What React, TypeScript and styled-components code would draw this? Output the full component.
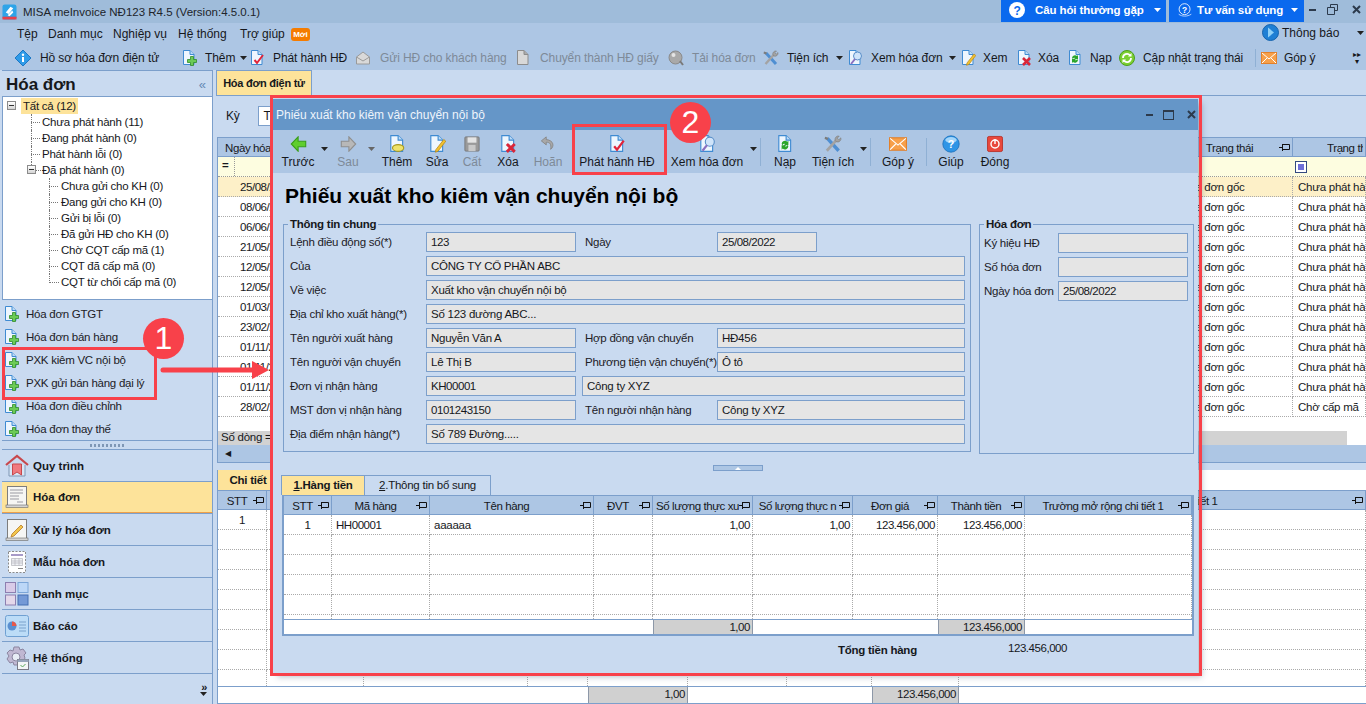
import React from "react";
import styled, { createGlobalStyle } from "styled-components";

const GlobalStyle = createGlobalStyle`
  html, body { margin: 0; padding: 0; background: #c9daf0; }
  body {
    font-family: "Liberation Sans", Arial, sans-serif;
    font-size: 11.5px;
    letter-spacing: -0.25px;
    color: #16181c;
    overflow: hidden;
  }
  * { box-sizing: border-box; }
`;

const RED = "#f8414a";
const LINE = "#7c9fcb";

/* ---------- icons ---------- */
type Badge = "plus" | "check" | "x" | "pencil" | "lens" | "coin" | "nap" | "none";

const DocIcon = ({ badge = "none", size = 16, grey = false }: { badge?: Badge; size?: number; grey?: boolean }) => {
  const line = grey ? "#8c8c8c" : "#3f8bd2";
  return (
    <svg width={size} height={size} viewBox="0 0 16 16">
      <path d="M2.500.5h6.500l4 4v10h-10.500z" fill={grey ? "#d8d8d8" : "#eef6fe"} stroke={line} />
      <path d="M9 .5v4h4" fill={grey ? "#aaa" : "#bcdaf6"} stroke={line} />
      {badge === "plus" && <path d="M9.500 6.500h3v3h3v3h-3v3h-3v-3h-3v-3h3z" fill="#6ccb55" stroke="#2f8a2a" strokeWidth=".8" />}
      {badge === "check" && <path d="M5.500 10l2.500 3 6-8" fill="none" stroke="#e0243a" strokeWidth="2" />}
      {badge === "x" && <path d="M7 8l7 7M14 8l-7 7" stroke="#d9263a" strokeWidth="2.600" />}
      {badge === "pencil" && <path d="M7 13l7-9 1.800 1.500-7 9-2.300.8z" fill="#f2c230" stroke="#b8871a" strokeWidth=".7" />}
      {badge === "lens" && (
        <g>
          <circle cx="10.500" cy="6" r="4" fill="#cfe4fa" stroke="#5a8fc8" />
          <path d="M8 9l-4 5" stroke="#8a6fc0" strokeWidth="2" />
        </g>
      )}
      {badge === "coin" && <ellipse cx="9" cy="11.500" rx="5" ry="3" fill="#efe36a" stroke="#a99a20" />}
      {badge === "nap" && <path d="M5 8a3 3 0 0 1 5-2l1-1v4h-4l1-1a1.500 1.500 0 0 0-2 1zM11 10a3 3 0 0 1-5 2l-1 1v-4h4l-1 1a1.500 1.500 0 0 0 2-1z" fill="#2aa52a" />}
    </svg>
  );
};

const InfoDiamond = () => (
  <svg width="18" height="18" viewBox="0 0 18 18">
    <path d="M9 1l8 8-8 8-8-8z" fill="#2f9be8" stroke="#1c77c4" />
    <circle cx="9" cy="5.800" r="1.200" fill="#fff" />
    <rect x="8" y="8" width="2" height="5" fill="#fff" />
  </svg>
);

const Envelope = ({ grey = false, size = 16 }: { grey?: boolean; size?: number }) =>
  grey ? (
    <svg width={size} height={size} viewBox="0 0 16 16">
      <path d="M1.500 7L8 2l6.500 5v7h-13z" fill="#d9d9d9" stroke="#9a9a9a" />
      <path d="M1.500 7L8 11l6.500-4" fill="none" stroke="#9a9a9a" />
    </svg>
  ) : (
    <svg width={size} height={size} viewBox="0 0 16 16">
      <rect x=".5" y="2.500" width="15" height="11" fill="#f7a04a" stroke="#e2802a" />
      <path d="M1 3l7 6 7-6M1 13l5-5M15 13l-5-5" fill="none" stroke="#fff" />
    </svg>
  );

const ToolsIcon = ({ size = 16 }: { size?: number }) => (
  <svg width={size} height={size} viewBox="0 0 16 16">
    <path d="M3 3l10 11" stroke="#4f8fd2" strokeWidth="3" />
    <path d="M2.500 14L11 4.500" stroke="#a3a3a3" strokeWidth="2.400" />
    <path d="M10 5a3 3 0 0 1 3.500-4l-1.700 1.800 1.400 1.400L15 2.500A3 3 0 0 1 11 6z" fill="#a3a3a3" stroke="#7c7c7c" strokeWidth=".6" />
    <path d="M1 1.500l3 1-1 2-2.500-1z" fill="#7c7c7c" />
  </svg>
);

const GreenRefresh = () => (
  <svg width="16" height="16" viewBox="0 0 16 16">
    <circle cx="8" cy="8" r="7.500" fill="#7ccf32" stroke="#4c9f1c" />
    <path d="M4 8a4 4 0 0 1 7-2.700M12 8a4 4 0 0 1-7 2.700" fill="none" stroke="#fff" strokeWidth="1.800" />
    <path d="M12.500 3v3.500H9zM3.500 13V9.500H7z" fill="#fff" />
  </svg>
);

const Globe = () => (
  <svg width="17" height="17" viewBox="0 0 17 17">
    <circle cx="8.500" cy="8.500" r="8" fill="#1f7fd4" stroke="#1663ad" />
    <path d="M6 3.500l6 5-6 5z" fill="#8fd0f7" />
  </svg>
);

const GreyBall = () => (
  <svg width="16" height="16" viewBox="0 0 16 16">
    <circle cx="7.500" cy="7.500" r="6.500" fill="#a9a9a9" stroke="#8a8a8a" />
    <circle cx="5.500" cy="5" r="2" fill="#e4e4e4" />
    <path d="M12 11l3 4" stroke="#7a7a7a" strokeWidth="2" />
  </svg>
);

const AppLogo = () => (
  <svg width="15" height="16" viewBox="0 0 16 17">
    <rect x=".5" y=".5" width="15" height="16" rx="2.500" fill="#2ea4e8" />
    <path d="M4 9l5-6 3 1.500-5 6zM6 12l5-5 1 2-4 4z" fill="#fff" />
    <rect x=".5" y="13.500" width="15" height="3" fill="#e8404a" />
  </svg>
);

const ArrowIcon = ({ dir, grey }: { dir: "left" | "right"; grey?: boolean }) => (
  <svg width="17" height="16" viewBox="0 0 20 20">
    <g transform={dir === "right" ? "matrix(-1 0 0 1 20 0)" : undefined}>
      <path
        d="M9.500 1L1 10l8.500 9v-5.500h9.500v-7H9.500z"
        fill={grey ? "#b8b8b8" : "#5fce2e"}
        stroke={grey ? "#8f8f8f" : "#3a9d1c"}
        strokeWidth="1.400"
      />
    </g>
  </svg>
);

const FloppyIcon = () => (
  <svg width="16" height="16" viewBox="0 0 18 18">
    <rect x="1" y="1" width="16" height="16" rx="1" fill="#9a9a9a" stroke="#777" />
    <rect x="4" y="1.500" width="10" height="6" fill="#e4e4e4" />
    <rect x="5" y="10" width="8" height="7" fill="#c9c9c9" />
  </svg>
);

const UndoIcon = () => (
  <svg width="16" height="16" viewBox="0 0 18 18">
    <path d="M7 1L1.500 5.500 7 10V7c4 0 6 2 5 8 4-3 4-10-5-11z" fill="#a8a8a8" stroke="#858585" />
  </svg>
);

const HelpIcon = () => (
  <svg width="18" height="18" viewBox="0 0 22 22">
    <circle cx="11" cy="11" r="10" fill="#2f95e6" stroke="#1b6fba" />
    <ellipse cx="11" cy="6" rx="7" ry="3.500" fill="#a5d6fa" />
    <text x="11" y="16" fontFamily="Liberation Sans" fontSize="13" fontWeight="700" fill="#fff" textAnchor="middle">?</text>
  </svg>
);

const PowerIcon = () => (
  <svg width="16" height="18" viewBox="0 0 18 20">
    <rect x=".5" y="1.500" width="17" height="17" rx="2" fill="#e8483c" stroke="#b92f26" />
    <circle cx="9" cy="10" r="4.500" fill="none" stroke="#fff" strokeWidth="1.600" />
    <path d="M9 4.500V10" stroke="#fff" strokeWidth="1.600" />
  </svg>
);

const Caret = ({ color = "#222" }: { color?: string }) => (
  <svg width="7" height="4" viewBox="0 0 7 4">
    <path d="M0 0h7L3.500 4z" fill={color} />
  </svg>
);

const PinIcon = () => (
  <svg width="11" height="9" viewBox="0 0 11 9">
    <path d="M0 4.500h4M3.500 1v7M3.500 1.500h7v5h-7" fill="none" stroke="#111" />
  </svg>
);

const HouseIcon = () => (
  <svg width="24" height="24" viewBox="0 0 24 24">
    <path d="M4 11v11h16V11" fill="#d9e6f5" stroke="#7f97b5" />
    <path d="M1 11L12 2l11 9" fill="none" stroke="#c8484c" strokeWidth="2.200" />
    <path d="M7.500 10h9v11l-4.500-3-4.500 3z" fill="#f07a80" stroke="#c8484c" />
  </svg>
);

const LedgerIcon = ({ pencil }: { pencil?: boolean }) => (
  <svg width="24" height="24" viewBox="0 0 24 24">
    <rect x="2.500" y="1.500" width="19" height="20" fill="#f6f6f4" stroke="#7d7d7d" />
    <rect x="1" y="20" width="22" height="2.500" fill="#d4d4d4" stroke="#6a6a6a" strokeWidth=".6" />
    {pencil ? (
      <path d="M7 16l9-9 2 2-9 9-3 1z" fill="#f3c64b" stroke="#b67b2a" strokeWidth=".8" />
    ) : (
      <path d="M5 5h13M5 8h13M5 11h9M5 14h9M12 17h6" stroke="#9a9aa2" strokeWidth="1.200" />
    )}
  </svg>
);

const FormIcon = () => (
  <svg width="24" height="24" viewBox="0 0 24 24">
    <rect x="3.500" y="1.500" width="17" height="21" fill="#fff" stroke="#8a8a8a" strokeDasharray="2 1.500" />
    <rect x="6" y="4" width="12" height="2" fill="#a79ac8" />
    <path d="M6.500 8.500h11v7h-11zM6.500 11h11M6.500 13h11M10 8.500v7M14 8.500v7" fill="#eef0f4" stroke="#b4b4bc" strokeWidth=".7" />
    <path d="M13 18.500h5" stroke="#888" />
  </svg>
);

const CatalogIcon = () => (
  <svg width="24" height="24" viewBox="0 0 24 24">
    <rect x=".5" y=".5" width="10" height="10" fill="#d9cbe8" stroke="#8d7fb0" />
    <rect x="13" y=".5" width="10" height="10" fill="#bcd7f7" stroke="#7ca6d8" />
    <rect x=".5" y="13" width="10" height="10" fill="#e4d8ea" stroke="#8d7fb0" />
    <rect x="13" y="13" width="10" height="10" fill="#7499d6" stroke="#456eb2" />
  </svg>
);

const ReportIcon = () => (
  <svg width="24" height="24" viewBox="0 0 24 24">
    <rect x=".5" y="1.500" width="23" height="21" rx="2" fill="#bcdcf7" stroke="#6fa0d2" />
    <circle cx="7" cy="12" r="4.500" fill="#5a8fd0" />
    <path d="M7 12V7.500A4.500 4.500 0 0 1 11.500 12z" fill="#e8584a" />
    <path d="M14 8h7M14 11h7M14 14h7M14 17h7" stroke="#7ba2cc" />
  </svg>
);

const GearIcon = () => (
  <svg width="24" height="24" viewBox="0 0 24 24">
    <path d="M9 1h5l1 3 3-1 3 4-2 2 1 3-2 4-3-.5-1 3.500H9l-1-3-3 1-3-4 2-3-2-3 3-3 3 1z" fill="#c0b8d2" stroke="#8b85a0" />
    <circle cx="11" cy="11" r="4" fill="#e7edf5" stroke="#8b85a0" />
    <rect x="12.500" y="13.500" width="11" height="10" fill="#f4f6f8" stroke="#7a7a86" />
    <rect x="12.500" y="13.500" width="11" height="2.500" fill="#97a5bb" />
    <path d="M15.500 19l2 2 3-3" fill="none" stroke="#5ca85c" />
  </svg>
);

/* ---------- top bars ---------- */
const Page = styled.div`
  position: relative;
  width: 1366px;
  height: 704px;
  overflow: hidden;
  display: flex;
  flex-direction: column;
  background: #c9daf0;
`;

const TitleBar = styled.div`
  height: 23px;
  background: #9fbcda;
  display: flex;
  align-items: flex-start;
  letter-spacing: 0;
`;

const AppTitle = styled.div`
  display: flex;
  align-items: center;
  gap: 6px;
  height: 23px;
  padding-left: 2px;
  flex: 1;
  color: #20242a;
`;

const HelpBtn = styled.div<{ $w: number; $gap: number }>`
  width: ${(p) => p.$w}px;
  height: 22px;
  margin-right: 3px;
  background: #0a69ee;
  color: #fff;
  font-weight: 700;
  letter-spacing: -0.1px;
  display: flex;
  align-items: center;
  padding: 0 6px 2px 8px;
  gap: ${(p) => p.$gap}px;
  white-space: nowrap;
  span { flex: 1; }
  svg { flex: none; }
`;

const WinBtns = styled.div`
  width: 59px;
  height: 23px;
  display: flex;
  align-items: center;
  justify-content: space-between;
  padding: 0 5px 4px 2px;
  color: #333;
`;

const MenuBar = styled.div`
  height: 22px;
  background: #adc6e4;
  display: flex;
  align-items: center;
  font-size: 12px;
  letter-spacing: 0;
`;

const Grip = styled.div`
  width: 3px;
  height: 18px;
  margin-left: 4px;
  background-image: radial-gradient(#7f97b5 40%, transparent 45%);
  background-size: 2px 2px;
  flex: none;
`;

const BarSlot = styled.div<{ $w: number }>`
  width: ${(p) => p.$w}px;
  flex: none;
  white-space: nowrap;
`;

const NewBadge = styled.div`
  width: 19px;
  height: 13px;
  border-radius: 3px;
  background: #f57c00;
  color: #fff;
  font-size: 8px;
  font-weight: 700;
  line-height: 13px;
  text-align: center;
`;

const NoticeBtn = styled.div`
  margin-left: auto;
  display: flex;
  align-items: center;
  gap: 3px;
  width: 104px;
  padding: 0 2px 3px 0;
  white-space: nowrap;
  span { flex: 1; }
`;

const TopToolbar = styled.div`
  height: 25px;
  background: #adc6e4;
  display: flex;
  align-items: center;
  font-size: 12px;
  letter-spacing: -0.1px;
`;

const TopBtn = styled.div<{ $w: number; $off?: boolean; $gap?: number }>`
  width: ${(p) => p.$w}px;
  flex: none;
  display: flex;
  align-items: center;
  gap: ${(p) => p.$gap ?? 8}px;
  white-space: nowrap;
  color: ${(p) => (p.$off ? "#7e8a98" : "#16181c")};
  svg { flex: none; }
`;

const TopCaret = styled.div<{ $w: number }>`
  width: ${(p) => p.$w}px;
  flex: none;
  display: flex;
  align-items: center;
  padding-left: 1px;
`;

const BarSep = styled.div`
  width: 1px;
  height: 18px;
  background: #8fb0d4;
  flex: none;
`;

const Overflow = styled.div`
  margin-left: auto;
  margin-right: 5px;
  font-size: 8px;
  line-height: 7px;
  text-align: center;
`;

/* ---------- sidebar ---------- */
const Workspace = styled.div`
  flex: 1;
  display: grid;
  grid-template-columns: 216px 1fr;
  min-height: 0;
`;

const Sidebar = styled.aside`
  display: flex;
  flex-direction: column;
  padding-left: 2px;
  padding-right: 3px;
`;

const SideHead = styled.div`
  height: 26px;
  display: flex;
  align-items: center;
  justify-content: space-between;
  padding: 2px 6px 0 4px;
  border-top: 1px solid ${LINE};
  border-right: 1px solid ${LINE};
  font-size: 17px;
  font-weight: 700;
  letter-spacing: 0;
  b { font-size: 13px; color: #6488b4; font-weight: 400; }
`;

const Tree = styled.div`
  height: 204px;
  background: #fff;
  border: 1px solid ${LINE};
  padding-top: 1px;
`;

const TreeRow = styled.div<{ $level: number; $last?: boolean }>`
  position: relative;
  height: 16px;
  line-height: 16px;
  padding-left: ${(p) => 18 + p.$level * 19}px;
  white-space: nowrap;
  &::before {
    content: "";
    display: ${(p) => (p.$level ? "block" : "none")};
    position: absolute;
    left: ${(p) => 10 + p.$level * 18}px;
    top: 0;
    width: 9px;
    height: ${(p) => (p.$last ? 8 : 16)}px;
    border-left: 1px dotted #777;
    border-bottom: ${(p) => (p.$last ? "1px dotted #777" : "0")};
  }
  &::after {
    content: "";
    display: ${(p) => (p.$level && !p.$last ? "block" : "none")};
    position: absolute;
    left: ${(p) => 10 + p.$level * 18}px;
    top: 8px;
    width: 9px;
    border-top: 1px dotted #777;
  }
`;

const TreeLabel = styled.span<{ $on?: boolean }>`
  display: inline-block;
  padding: 0 2px;
  background: ${(p) => (p.$on ? "#fde39a" : "transparent")};
`;

const Expander = styled.i<{ $left: number }>`
  position: absolute;
  z-index: 1;
  left: ${(p) => p.$left}px;
  top: 3px;
  width: 9px;
  height: 9px;
  border: 1px solid #8b8b8b;
  background: linear-gradient(#fff, #d4d4d4);
  &::after {
    content: "";
    position: absolute;
    left: 1px;
    right: 1px;
    top: 3px;
    height: 1px;
    background: #333;
  }
`;

const Shortcuts = styled.div`
  height: 141px;
  padding: 2px 0 0 1px;
  border-right: 1px solid ${LINE};
  border-bottom: 1px solid ${LINE};
`;

const Shortcut = styled.div`
  height: 23px;
  display: flex;
  align-items: center;
  gap: 7px;
  color: #1c2026;
`;

const SideGrip = styled.div`
  height: 8px;
  display: flex;
  justify-content: center;
  align-items: center;
  border-right: 1px solid ${LINE};
  &::before {
    content: "";
    width: 35px;
    height: 3px;
    background-image: repeating-linear-gradient(90deg, #7f97b5 0 2px, transparent 2px 4px);
  }
`;

const NavItem = styled.div<{ $on?: boolean }>`
  height: 32px;
  display: flex;
  align-items: center;
  gap: 4px;
  padding-left: 3px;
  font-weight: 700;
  letter-spacing: 0;
  border-top: 1px solid ${LINE};
  border-right: 1px solid ${LINE};
  background: ${(p) => (p.$on ? "#fde39a" : "transparent")};
  border-bottom: ${(p) => (p.$on ? "1px solid #eea04a" : "0")};
`;

const NavRest = styled.div`
  flex: 1;
  border-top: 1px solid ${LINE};
  border-right: 1px solid ${LINE};
  display: flex;
  flex-direction: column;
  align-items: flex-end;
  justify-content: center;
  padding-right: 5px;
  font-size: 11px;
  line-height: 10px;
  font-weight: 700;
`;

/* ---------- main area ---------- */
const Main = styled.main`
  display: flex;
  flex-direction: column;
  min-width: 0;
`;

const TabStrip = styled.div`
  height: 26px;
  border-bottom: 1px solid ${LINE};
`;

const MainTab = styled.div`
  width: 96px;
  height: 26px;
  background: #fde39a;
  border: 1px solid ${LINE};
  font-weight: 700;
  font-size: 11px;
  line-height: 24px;
  text-align: center;
`;

const PeriodRow = styled.div`
  height: 41px;
  display: flex;
  align-items: center;
  gap: 18px;
  padding: 0 0 2px 10px;
  font-size: 12px;
`;

const PeriodInput = styled.div`
  width: 130px;
  height: 20px;
  background: #fff;
  border: 1px solid ${LINE};
  padding-left: 5px;
  line-height: 18px;
`;

const GridShell = styled.div<{ $h: number }>`
  height: ${(p) => p.$h}px;
  margin-left: 1px;
  background: #fff;
  border-left: 1px solid ${LINE};
  overflow: hidden;
  display: flex;
  flex-direction: column;
`;

const GridLine = styled.div<{ $cols: string }>`
  display: grid;
  grid-template-columns: ${(p) => p.$cols};
  flex: none;
`;

const HeadCell = styled.div<{ $pad?: number }>`
  height: 20px;
  background: #adc6e4;
  border-right: 1px solid ${LINE};
  border-top: 1px solid ${LINE};
  border-bottom: 1px solid ${LINE};
  display: flex;
  align-items: center;
  padding: 1px 2px 0 ${(p) => p.$pad ?? 3}px;
  letter-spacing: -0.4px;
  white-space: nowrap;
  overflow: hidden;
  span { flex: 1; text-align: ${(p) => (p.$pad !== undefined ? "left" : "center")}; overflow: hidden; }
  svg { flex: none; }
`;

const FilterCell = styled.div`
  height: 20px;
  background: #fdfde0;
  border-bottom: 1px dotted #999;
  display: flex;
  align-items: center;
  overflow: hidden;
`;

const FilterSign = styled.div`
  width: 17px;
  height: 19px;
  border-right: 1px dotted #999;
  padding-left: 4px;
  line-height: 17px;
  font-weight: 700;
`;

const FilterBox = styled.div`
  width: 12px;
  height: 12px;
  margin-left: 2px;
  border: 1px solid #334a80;
  background: #fff;
  padding: 2px;
  &::after {
    content: "";
    display: block;
    height: 100%;
    background: #6f6fd8;
  }
`;

const DataCell = styled.div<{ $right?: boolean; $center?: boolean; $sel?: boolean; $pad?: number; $num?: boolean }>`
  height: 20px;
  line-height: 21px;
  border-right: 1px dotted #aaa;
  border-bottom: 1px dotted #aaa;
  padding: 0 ${(p) => (p.$right ? 2 : 4)}px 0 ${(p) => p.$pad ?? 4}px;
  text-align: ${(p) => (p.$center ? "center" : p.$right ? "right" : "left")};
  background: ${(p) => (p.$sel ? "#fdf0c8" : "#fff")};
  letter-spacing: ${(p) => (p.$num ? "-0.45px" : "inherit")};
  white-space: nowrap;
  overflow: hidden;
`;

const GridBody = styled.div`
  flex: 1;
  min-height: 0;
  overflow: hidden;
`;

const CountRow = styled.div`
  height: 14px;
  flex: none;
  margin-right: 19px;
  background: #d2d2d2;
  line-height: 13px;
  padding-left: 3px;
  overflow: hidden;
`;

const ScrollRow = styled.div`
  height: 18px;
  flex: none;
  background: #adc6e4;
  border-bottom: 1px solid ${LINE};
  display: flex;
  align-items: center;
  padding-left: 7px;
  font-size: 8px;
`;

const PanelGap = styled.div`
  height: 7px;
  flex: none;
`;

const DetailTab = styled.div`
  width: 60px;
  height: 20px;
  background: #fde39a;
  font-weight: 700;
  line-height: 20px;
  text-align: center;
  flex: none;
`;

const SumCell = styled.div<{ $grey?: boolean }>`
  height: 16px;
  line-height: 15px;
  padding-right: 2px;
  text-align: right;
  letter-spacing: -0.45px;
  background: ${(p) => (p.$grey ? "#d0d0d0" : "#fff")};
  border-left: ${(p) => (p.$grey ? "1px solid #8d98a8" : "0")};
  border-right: ${(p) => (p.$grey ? "1px solid #8d98a8" : "0")};
`;

const SumRow = styled(GridLine)`
  border-top: 1px solid ${LINE};
  border-bottom: 1px solid ${LINE};
`;

/* ---------- dialog ---------- */
const Dialog = styled.section`
  position: absolute;
  left: 273px;
  top: 99px;
  width: 925px;
  height: 574px;
  background: #c9daf0;
  box-shadow: 4px 4px 6px rgba(60, 80, 110, 0.35);
  display: flex;
  flex-direction: column;
`;

const DialogTitle = styled.div`
  height: 31px;
  flex: none;
  background: #6596c8;
  color: #eef4fb;
  font-size: 12px;
  letter-spacing: 0;
  display: flex;
  align-items: center;
  justify-content: space-between;
  padding: 0 2px 0 3px;
`;

const DialogCtrls = styled.div`
  display: flex;
  align-items: center;
  gap: 9px;
  color: #2c3a4c;
`;

const MinGlyph = styled.i`
  width: 7px;
  height: 2px;
  background: #2c3a4c;
  margin-right: 1px;
`;

const MaxGlyph = styled.i`
  width: 11px;
  height: 10px;
  border: 1px solid #2c3a4c;
  border-top-width: 2px;
`;

const CloseGlyph = styled.svg`
  width: 9px;
  height: 9px;
  margin-left: 4px;
`;

const DialogBar = styled.div`
  height: 43px;
  flex: none;
  background: #adc6e4;
  display: flex;
  padding-left: 5px;
  font-size: 12px;
  letter-spacing: 0;
`;

const BarItem = styled.div<{ $w: number; $off?: boolean }>`
  width: ${(p) => p.$w}px;
  flex: none;
  display: flex;
  flex-direction: column;
  align-items: center;
  color: ${(p) => (p.$off ? "#7e8a98" : "#16181c")};
  white-space: nowrap;
`;

const BarIcon = styled.div`
  height: 25px;
  display: flex;
  align-items: center;
  justify-content: center;
  padding-top: 3px;
`;

const BarLabel = styled.div`
  line-height: 14px;
`;

const BarCaret = styled.div<{ $w: number }>`
  width: ${(p) => p.$w}px;
  flex: none;
  padding-top: 17px;
  line-height: 0;
  text-align: center;
`;

const BarDivider = styled.div<{ $w: number }>`
  width: ${(p) => p.$w}px;
  flex: none;
  display: flex;
  justify-content: center;
  padding-top: 8px;
  &::before {
    content: "";
    width: 1px;
    height: 28px;
    background: #8fb0d4;
  }
`;

const DialogBody = styled.div`
  flex: 1;
  min-height: 0;
  display: flex;
  flex-direction: column;
  padding: 0 4px 0 8px;
`;

const DialogHeading = styled.h1`
  margin: 0;
  height: 44px;
  line-height: 46px;
  padding-left: 4px;
  font-size: 21px;
  font-weight: 700;
  letter-spacing: 0;
  color: #000;
  white-space: nowrap;
  flex: none;
`;

const GroupRow = styled.div`
  display: flex;
  gap: 8px;
  padding-left: 2px;
  height: 235px;
  flex: none;
`;

const Group = styled.fieldset<{ $w: number; $h: number }>`
  margin: 0;
  width: ${(p) => p.$w}px;
  height: ${(p) => p.$h}px;
  padding: 0 5px 0 6px;
  border: 1px solid ${LINE};
  min-width: 0;
`;

const GroupTitle = styled.legend`
  padding: 0 2px;
  margin-left: -2px;
  font-weight: 700;
  line-height: 14px;
`;

const FormGrid = styled.div`
  display: grid;
  grid-template-columns: 136px 150px 141px 100px 148px;
  grid-auto-rows: 20px;
  row-gap: 4px;
  padding-top: 1px;
`;

const InvoiceGrid = styled.div`
  display: grid;
  grid-template-columns: 74px 130px;
  grid-auto-rows: 20px;
  row-gap: 4px;
  padding-top: 2px;
  margin-left: -2px;
`;

const FieldLabel = styled.label<{ $inner?: boolean }>`
  line-height: 21px;
  white-space: nowrap;
  padding-left: ${(p) => (p.$inner ? 9 : 0)}px;
  color: #1c2026;
`;

const FieldBox = styled.div<{ $span?: string; $inset?: number; $num?: boolean }>`
  grid-column: ${(p) => p.$span ?? "auto"};
  margin-left: ${(p) => p.$inset ?? 0}px;
  background: #e5e5e5;
  border: 1px solid ${LINE};
  line-height: 18px;
  padding-left: 4px;
  letter-spacing: ${(p) => (p.$num ? "-0.45px" : "inherit")};
  white-space: nowrap;
  overflow: hidden;
`;

const SplitBtn = styled.div`
  width: 50px;
  height: 6px;
  margin: 13px 0 4px 432px;
  background: #adc6e4;
  border: 1px solid ${LINE};
  display: flex;
  justify-content: center;
  flex: none;
  &::before {
    content: "";
    border-left: 3px solid transparent;
    border-right: 3px solid transparent;
    border-bottom: 3px solid #fff;
  }
`;

const Tabs = styled.div`
  display: flex;
  height: 20px;
  flex: none;
`;

const FormTab = styled.div<{ $on?: boolean; $w: number }>`
  width: ${(p) => p.$w}px;
  height: 20px;
  line-height: 19px;
  text-align: center;
  background: ${(p) => (p.$on ? "#fde39a" : "transparent")};
  font-weight: ${(p) => (p.$on ? 700 : 400)};
  border: 1px solid ${LINE};
  border-bottom: 0;
  border-left-width: ${(p) => (p.$on ? 1 : 0)}px;
  u { text-decoration: underline; }
`;

const ItemsGrid = styled.div`
  margin-left: 1px;
  width: 912px;
  height: 141px;
  background: #fff;
  border: 2px solid ${LINE};
  border-top-width: 0;
  display: flex;
  flex-direction: column;
  overflow: hidden;
  flex: none;
`;

const ItemsBody = styled.div`
  height: 104px;
  overflow: hidden;
  flex: none;
`;

const TotalRow = styled.div`
  display: flex;
  padding-left: 557px;
  margin-top: 6px;
`;

const TotalLabel = styled.div`
  width: 170px;
  padding-top: 2px;
  font-weight: 700;
`;

const TotalValue = styled.div`
  letter-spacing: -0.45px;
`;

/* ---------- annotations ---------- */
const RedFrame = styled.div<{ $x: number; $y: number; $w: number; $h: number }>`
  position: absolute;
  left: ${(p) => p.$x}px;
  top: ${(p) => p.$y}px;
  width: ${(p) => p.$w}px;
  height: ${(p) => p.$h}px;
  border: 3px solid ${RED};
  pointer-events: none;
`;

const StepDot = styled.div<{ $x: number; $y: number }>`
  position: absolute;
  left: ${(p) => p.$x}px;
  top: ${(p) => p.$y}px;
  width: 41px;
  height: 41px;
  border-radius: 50%;
  background: ${RED};
  color: #fff;
  font-size: 32px;
  letter-spacing: 0;
  line-height: 40px;
  text-align: center;
`;

const FlowArrow = styled.svg`
  position: absolute;
  left: 160px;
  top: 360px;
`;

/* ---------- data ---------- */
const dates = ["25/08/2022", "08/06/2022", "06/06/2022", "21/05/2022", "12/05/2022", "12/05/2022", "01/03/2022", "23/02/2022", "01/11/2021", "01/11/2021", "01/11/2021", "28/02/2022"];

const tree: { text: string; level: number; last?: boolean }[] = [
  { text: "Chưa phát hành (11)", level: 1 },
  { text: "Đang phát hành (0)", level: 1 },
  { text: "Phát hành lỗi (0)", level: 1 },
  { text: "Đã phát hành (0)", level: 1, last: true },
  { text: "Chưa gửi cho KH (0)", level: 2 },
  { text: "Đang gửi cho KH (0)", level: 2 },
  { text: "Gửi bị lỗi (0)", level: 2 },
  { text: "Đã gửi HĐ cho KH (0)", level: 2 },
  { text: "Chờ CQT cấp mã (1)", level: 2 },
  { text: "CQT đã cấp mã (0)", level: 2 },
  { text: "CQT từ chối cấp mã (0)", level: 2, last: true },
];

const shortcuts = ["Hóa đơn GTGT", "Hóa đơn bán hàng", "PXK kiêm VC nội bộ", "PXK gửi bán hàng đại lý", "Hóa đơn điều chỉnh", "Hóa đơn thay thế"];

const navs: { label: string; icon: React.ReactNode; on?: boolean }[] = [
  { label: "Quy trình", icon: <HouseIcon /> },
  { label: "Hóa đơn", icon: <LedgerIcon />, on: true },
  { label: "Xử lý hóa đơn", icon: <LedgerIcon pencil /> },
  { label: "Mẫu hóa đơn", icon: <FormIcon /> },
  { label: "Danh mục", icon: <CatalogIcon /> },
  { label: "Báo cáo", icon: <ReportIcon /> },
  { label: "Hệ thống", icon: <GearIcon /> },
];

const itemHeads = ["STT", "Mã hàng", "Tên hàng", "ĐVT", "Số lượng thực xu", "Số lượng thực n", "Đơn giá", "Thành tiền", "Trường mở rộng chi tiết 1"];
const itemCols = "48px 98px 164px 59px 100px 100px 85px 87px 1fr";
const detailCols = "49px 97px 164px 60px 100px 99px 85px 87px 1fr";
const upperCols = "82px 877px 116px 1fr";

const Head = ({ text }: { text: string }) => (
  <HeadCell>
    <span>{text}</span>
    <PinIcon />
  </HeadCell>
);

const TopBar = () => (
  <>
    <TitleBar>
      <AppTitle>
        <AppLogo />
        <span>MISA meInvoice NĐ123 R4.5 (Version:4.5.0.1)</span>
      </AppTitle>
      <HelpBtn $w={165} $gap={10}>
        <svg width="16" height="16" viewBox="0 0 16 16">
          <circle cx="8" cy="8" r="8" fill="#fff" />
          <text x="8" y="12.500" fontFamily="Liberation Sans" fontSize="12" fontWeight="700" fill="#0a69ee" textAnchor="middle">?</text>
        </svg>
        <span>Câu hỏi thường gặp</span>
        <Caret color="#fff" />
      </HelpBtn>
      <HelpBtn $w={135} $gap={4}>
        <svg width="16" height="16" viewBox="0 0 19 16">
          <circle cx="9" cy="7" r="6.500" fill="none" stroke="#fff" />
          <path d="M2 13c4 3 10 3 15 0" fill="none" stroke="#cfe2ff" />
          <text x="9" y="11" fontFamily="Liberation Sans" fontSize="10" fontWeight="700" fill="#fff" textAnchor="middle">?</text>
        </svg>
        <span>Tư vấn sử dụng</span>
        <Caret color="#fff" />
      </HelpBtn>
      <WinBtns>
        <MinGlyph />
        <svg width="11" height="11" viewBox="0 0 11 11">
          <path d="M3.500 3V.5h7v6H8M.5 3.500h7v7h-7z" fill="none" stroke="#2c3a4c" />
        </svg>
        <CloseGlyph viewBox="0 0 9 9">
          <path d="M1 1l7 7M8 1l-7 7" stroke="#2c3a4c" strokeWidth="2" />
        </CloseGlyph>
      </WinBtns>
    </TitleBar>
    <MenuBar>
      <Grip />
      <BarSlot $w={10} />
      <BarSlot $w={31}>Tệp</BarSlot>
      <BarSlot $w={65}>Danh mục</BarSlot>
      <BarSlot $w={65}>Nghiệp vụ</BarSlot>
      <BarSlot $w={62}>Hệ thống</BarSlot>
      <BarSlot $w={51}>Trợ giúp</BarSlot>
      <NewBadge>Mới</NewBadge>
      <NoticeBtn>
        <Globe />
        <span>Thông báo</span>
        <Caret />
      </NoticeBtn>
    </MenuBar>
    <TopToolbar>
      <Grip />
      <BarSlot $w={7} />
      <TopBtn $w={154}>
        <InfoDiamond />
        <span>Hồ sơ hóa đơn điện tử</span>
      </TopBtn>
      <Grip />
      <BarSlot $w={6} />
      <TopBtn $w={58}>
        <DocIcon badge="plus" />
        <span>Thêm</span>
      </TopBtn>
      <TopCaret $w={10}>
        <Caret />
      </TopCaret>
      <TopBtn $w={106}>
        <DocIcon badge="check" />
        <span>Phát hành HĐ</span>
      </TopBtn>
      <TopBtn $w={160} $off $gap={9}>
        <Envelope grey />
        <span>Gửi HĐ cho khách hàng</span>
      </TopBtn>
      <TopBtn $w={153} $off $gap={9}>
        <DocIcon grey />
        <span>Chuyển thành HĐ giấy</span>
      </TopBtn>
      <TopBtn $w={95} $off>
        <GreyBall />
        <span>Tải hóa đơn</span>
      </TopBtn>
      <TopBtn $w={72}>
        <ToolsIcon />
        <span>Tiện ích</span>
      </TopBtn>
      <TopCaret $w={12}>
        <Caret />
      </TopCaret>
      <TopBtn $w={101}>
        <DocIcon badge="lens" />
        <span>Xem hóa đơn</span>
      </TopBtn>
      <TopCaret $w={12}>
        <Caret />
      </TopCaret>
      <TopBtn $w={56} $gap={7}>
        <DocIcon badge="pencil" />
        <span>Xem</span>
      </TopBtn>
      <TopBtn $w={51} $gap={6}>
        <DocIcon badge="x" />
        <span>Xóa</span>
      </TopBtn>
      <TopBtn $w={52} $gap={7}>
        <DocIcon badge="nap" />
        <span>Nạp</span>
      </TopBtn>
      <TopBtn $w={136}>
        <GreenRefresh />
        <span>Cập nhật trạng thái</span>
      </TopBtn>
      <BarSep />
      <BarSlot $w={5} />
      <TopBtn $w={60} $gap={7}>
        <Envelope />
        <span>Góp ý</span>
      </TopBtn>
      <Overflow>
        ▸▸
        <br />▾
      </Overflow>
    </TopToolbar>
  </>
);

const SideBar = () => (
  <Sidebar>
    <SideHead>
      Hóa đơn <b>«</b>
    </SideHead>
    <Tree>
      <TreeRow $level={0}>
        <Expander $left={4} />
        <TreeLabel $on>Tất cả (12)</TreeLabel>
      </TreeRow>
      {tree.map((n) => (
        <TreeRow key={n.text} $level={n.level} $last={n.last}>
          {n.text === "Đã phát hành (0)" && <Expander $left={24} />}
          <TreeLabel>{n.text}</TreeLabel>
        </TreeRow>
      ))}
    </Tree>
    <Shortcuts>
      {shortcuts.map((s) => (
        <Shortcut key={s}>
          <DocIcon badge="plus" />
          {s}
        </Shortcut>
      ))}
    </Shortcuts>
    <SideGrip />
    {navs.map((n) => (
      <NavItem key={n.label} $on={n.on}>
        {n.icon}
        {n.label}
      </NavItem>
    ))}
    <NavRest>
      »
      <Caret />
    </NavRest>
  </Sidebar>
);

const MainArea = () => (
  <Main>
    <TabStrip>
      <MainTab>Hóa đơn điện tử</MainTab>
    </TabStrip>
    <PeriodRow>
      <span>Kỳ</span>
      <PeriodInput>Từ đầu năm</PeriodInput>
    </PeriodRow>
    <GridShell $h={326}>
      <GridLine $cols={upperCols}>
        <HeadCell>
          <span>Ngày hóa đơn</span>
        </HeadCell>
        <HeadCell />
        <Head text="Trạng thái" />
        <HeadCell $pad={34}>
          <span>Trạng thái phát hành</span>
        </HeadCell>
      </GridLine>
      <GridLine $cols={upperCols}>
        <FilterCell>
          <FilterSign>=</FilterSign>
        </FilterCell>
        <FilterCell />
        <FilterCell />
        <FilterCell>
          <FilterBox />
        </FilterCell>
      </GridLine>
      <GridBody>
        {dates.map((d, i) => (
          <GridLine key={i} $cols={upperCols}>
            <DataCell $sel={i === 0} $pad={22} $num>{d}</DataCell>
            <DataCell $sel={i === 0} />
            <DataCell $sel={i === 0}>Hóa đơn gốc</DataCell>
            <DataCell $sel={i === 0} $pad={5}>{i === 11 ? "Chờ cấp mã" : "Chưa phát hành"}</DataCell>
          </GridLine>
        ))}
      </GridBody>
      <CountRow>Số dòng = 12</CountRow>
      <ScrollRow>◀</ScrollRow>
    </GridShell>
    <PanelGap />
    <GridShell $h={234}>
      <DetailTab>Chi tiết</DetailTab>
      <GridLine $cols={detailCols}>
        {itemHeads.map((h) => (
          <Head key={h} text={h} />
        ))}
      </GridLine>
      <GridBody>
        {Array.from({ length: 9 }).map((_, r) => (
          <GridLine key={r} $cols={detailCols}>
            {itemHeads.map((h, c) => (
              <DataCell key={h} $center={c === 0}>
                {r === 0 && c === 0 ? "1" : ""}
              </DataCell>
            ))}
          </GridLine>
        ))}
      </GridBody>
      <SumRow $cols={detailCols}>
        <SumCell />
        <SumCell />
        <SumCell />
        <SumCell />
        <SumCell $grey>1,00</SumCell>
        <SumCell />
        <SumCell />
        <SumCell $grey>123.456,000</SumCell>
        <SumCell />
      </SumRow>
    </GridShell>
  </Main>
);

const itemRow = ["1", "HH00001", "aaaaaa", "", "1,00", "1,00", "123.456,000", "123.456,000", ""];
const rightCols = [4, 5, 6, 7];

const VoucherDialog = () => (
  <Dialog>
    <DialogTitle>
      <span>Phiếu xuất kho kiêm vận chuyển nội bộ</span>
      <DialogCtrls>
        <MinGlyph />
        <MaxGlyph />
        <CloseGlyph viewBox="0 0 9 9">
          <path d="M1 1l7 7M8 1l-7 7" stroke="#2c3a4c" strokeWidth="2" />
        </CloseGlyph>
      </DialogCtrls>
    </DialogTitle>
    <DialogBar>
      <BarItem $w={40}>
        <BarIcon><ArrowIcon dir="left" /></BarIcon>
        <BarLabel>Trước</BarLabel>
      </BarItem>
      <BarCaret $w={12}><Caret /></BarCaret>
      <BarItem $w={36} $off>
        <BarIcon><ArrowIcon dir="right" grey /></BarIcon>
        <BarLabel>Sau</BarLabel>
      </BarItem>
      <BarCaret $w={10}><Caret color="#666" /></BarCaret>
      <BarItem $w={42}>
        <BarIcon><DocIcon badge="coin" size={18} /></BarIcon>
        <BarLabel>Thêm</BarLabel>
      </BarItem>
      <BarItem $w={38}>
        <BarIcon><DocIcon badge="pencil" size={18} /></BarIcon>
        <BarLabel>Sửa</BarLabel>
      </BarItem>
      <BarItem $w={32} $off>
        <BarIcon><FloppyIcon /></BarIcon>
        <BarLabel>Cất</BarLabel>
      </BarItem>
      <BarItem $w={40}>
        <BarIcon><DocIcon badge="x" size={18} /></BarIcon>
        <BarLabel>Xóa</BarLabel>
      </BarItem>
      <BarItem $w={40} $off>
        <BarIcon><UndoIcon /></BarIcon>
        <BarLabel>Hoãn</BarLabel>
      </BarItem>
      <BarItem $w={98}>
        <BarIcon><DocIcon badge="check" size={18} /></BarIcon>
        <BarLabel>Phát hành HĐ</BarLabel>
      </BarItem>
      <BarItem $w={82}>
        <BarIcon><DocIcon badge="lens" size={18} /></BarIcon>
        <BarLabel>Xem hóa đơn</BarLabel>
      </BarItem>
      <BarCaret $w={10}><Caret /></BarCaret>
      <BarDivider $w={4} />
      <BarItem $w={46}>
        <BarIcon><DocIcon badge="nap" size={18} /></BarIcon>
        <BarLabel>Nạp</BarLabel>
      </BarItem>
      <BarItem $w={50}>
        <BarIcon><ToolsIcon size={18} /></BarIcon>
        <BarLabel>Tiện ích</BarLabel>
      </BarItem>
      <BarCaret $w={10}><Caret /></BarCaret>
      <BarDivider $w={4} />
      <BarItem $w={52}>
        <BarIcon><Envelope size={18} /></BarIcon>
        <BarLabel>Góp ý</BarLabel>
      </BarItem>
      <BarDivider $w={4} />
      <BarItem $w={46}>
        <BarIcon><HelpIcon /></BarIcon>
        <BarLabel>Giúp</BarLabel>
      </BarItem>
      <BarItem $w={42}>
        <BarIcon><PowerIcon /></BarIcon>
        <BarLabel>Đóng</BarLabel>
      </BarItem>
    </DialogBar>
    <DialogBody>
      <DialogHeading>Phiếu xuất kho kiêm vận chuyển nội bộ</DialogHeading>
      <GroupRow>
        <Group $w={688} $h={235}>
          <GroupTitle>Thông tin chung</GroupTitle>
          <FormGrid>
            <FieldLabel>Lệnh điều động số(*)</FieldLabel>
            <FieldBox $num>123</FieldBox>
            <FieldLabel $inner>Ngày</FieldLabel>
            <FieldBox $num>25/08/2022</FieldBox>
            <span />
            <FieldLabel>Của</FieldLabel>
            <FieldBox $span="2 / -1">CÔNG TY CỔ PHẦN ABC</FieldBox>
            <FieldLabel>Về việc</FieldLabel>
            <FieldBox $span="2 / -1">Xuất kho vận chuyển nội bộ</FieldBox>
            <FieldLabel>Địa chỉ kho xuất hàng(*)</FieldLabel>
            <FieldBox $span="2 / -1">Số 123 đường ABC...</FieldBox>
            <FieldLabel>Tên người xuất hàng</FieldLabel>
            <FieldBox>Nguyễn Văn A</FieldBox>
            <FieldLabel $inner>Hợp đồng vận chuyển</FieldLabel>
            <FieldBox $span="4 / -1">HĐ456</FieldBox>
            <FieldLabel>Tên người vận chuyển</FieldLabel>
            <FieldBox>Lê Thị B</FieldBox>
            <FieldLabel $inner>Phương tiện vận chuyển(*)</FieldLabel>
            <FieldBox $span="4 / -1">Ô tô</FieldBox>
            <FieldLabel>Đơn vị nhận hàng</FieldLabel>
            <FieldBox $num>KH00001</FieldBox>
            <FieldBox $span="3 / -1" $inset={6}>Công ty XYZ</FieldBox>
            <FieldLabel>MST đơn vị nhận hàng</FieldLabel>
            <FieldBox $num>0101243150</FieldBox>
            <FieldLabel $inner>Tên người nhận hàng</FieldLabel>
            <FieldBox $span="4 / -1">Công ty XYZ</FieldBox>
            <FieldLabel>Địa điểm nhận hàng(*)</FieldLabel>
            <FieldBox $span="2 / -1">Số 789 Đường.....</FieldBox>
          </FormGrid>
        </Group>
        <Group $w={215} $h={237}>
          <GroupTitle>Hóa đơn</GroupTitle>
          <InvoiceGrid>
            <FieldLabel>Ký hiệu HĐ</FieldLabel>
            <FieldBox />
            <FieldLabel>Số hóa đơn</FieldLabel>
            <FieldBox />
            <FieldLabel>Ngày hóa đơn</FieldLabel>
            <FieldBox $num>25/08/2022</FieldBox>
          </InvoiceGrid>
        </Group>
      </GroupRow>
      <SplitBtn />
      <Tabs>
        <FormTab $on $w={84}>
          <u>1</u>.Hàng tiền
        </FormTab>
        <FormTab $w={126}>
          <u>2</u>.Thông tin bổ sung
        </FormTab>
      </Tabs>
      <ItemsGrid>
        <GridLine $cols={itemCols}>
          {itemHeads.map((h) => (
            <Head key={h} text={h} />
          ))}
        </GridLine>
        <ItemsBody>
          {Array.from({ length: 6 }).map((_, r) => (
            <GridLine key={r} $cols={itemCols}>
              {itemRow.map((v, c) => (
                <DataCell key={c} $center={c === 0} $right={rightCols.includes(c)} $num={c === 1 || rightCols.includes(c)}>
                  {r === 0 ? v : ""}
                </DataCell>
              ))}
            </GridLine>
          ))}
        </ItemsBody>
        <SumRow $cols={itemCols}>
          <SumCell />
          <SumCell />
          <SumCell />
          <SumCell />
          <SumCell $grey>1,00</SumCell>
          <SumCell />
          <SumCell />
          <SumCell $grey>123.456,000</SumCell>
          <SumCell />
        </SumRow>
      </ItemsGrid>
      <TotalRow>
        <TotalLabel>Tổng tiền hàng</TotalLabel>
        <TotalValue>123.456,000</TotalValue>
      </TotalRow>
    </DialogBody>
  </Dialog>
);

const Annotations = () => (
  <>
    <RedFrame $x={270} $y={95} $w={932} $h={581} />
    <RedFrame $x={2} $y={347} $w={155} $h={53} />
    <RedFrame $x={572} $y={124} $w={95} $h={51} />
    <StepDot $x={143} $y={318}>1</StepDot>
    <StepDot $x={670} $y={102}>2</StepDot>
    <FlowArrow width="110" height="20" viewBox="0 0 110 20">
      <path d="M3 10h92" stroke={RED} strokeWidth="5" strokeLinecap="round" />
      <path d="M92 1l17 9-17 9z" fill={RED} />
    </FlowArrow>
  </>
);

export default function App() {
  return (
    <>
      <GlobalStyle />
      <Page>
        <TopBar />
        <Workspace>
          <SideBar />
          <MainArea />
        </Workspace>
        <VoucherDialog />
        <Annotations />
      </Page>
    </>
  );
}
